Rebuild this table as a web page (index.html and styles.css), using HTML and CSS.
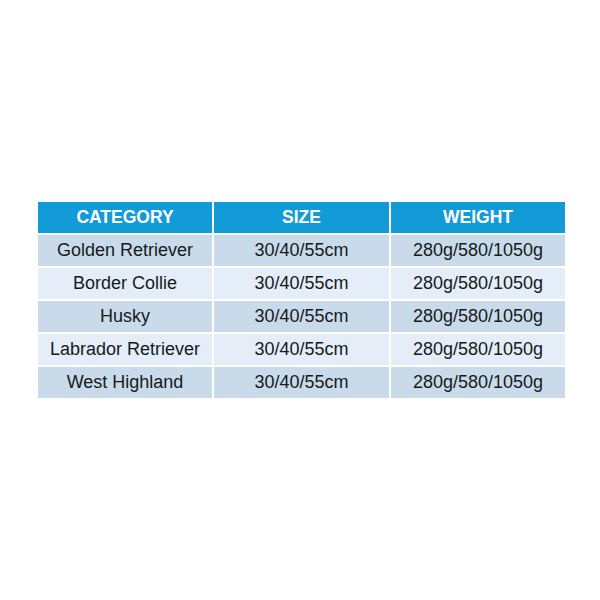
FILE: index.html
```html
<!DOCTYPE html>
<html>
<head>
<meta charset="utf-8">
<link rel="stylesheet" href="styles.css">
</head>
<body>
<div class="page">
  <div class="table">
    <div class="cell head">CATEGORY</div>
    <div class="cell head">SIZE</div>
    <div class="cell head">WEIGHT</div>

    <div class="cell odd">Golden Retriever</div>
    <div class="cell odd">30/40/55cm</div>
    <div class="cell odd">280g/580/1050g</div>

    <div class="cell even">Border Collie</div>
    <div class="cell even">30/40/55cm</div>
    <div class="cell even">280g/580/1050g</div>

    <div class="cell odd">Husky</div>
    <div class="cell odd">30/40/55cm</div>
    <div class="cell odd">280g/580/1050g</div>

    <div class="cell even">Labrador Retriever</div>
    <div class="cell even">30/40/55cm</div>
    <div class="cell even">280g/580/1050g</div>

    <div class="cell odd">West Highland</div>
    <div class="cell odd">30/40/55cm</div>
    <div class="cell odd">280g/580/1050g</div>
  </div>
</div>
</body>
</html>
```
FILE: styles.css
```css
html, body {
  margin: 0;
  padding: 0;
  background: #ffffff;
}
.page {
  width: 600px;
  height: 600px;
  padding-top: 202px;
  padding-left: 38px;
  box-sizing: border-box;
}
.table {
  display: grid;
  grid-template-columns: 174px 175px 174px;
  grid-template-rows: 31px repeat(5, 31px);
  column-gap: 2px;
  row-gap: 2px;
  width: 527px;
  font-family: "Liberation Sans", Arial, sans-serif;
}
.cell {
  display: flex;
  align-items: center;
  justify-content: center;
  font-size: 18px;
  color: #151a20;
}
.head {
  background: #139bd8;
  color: #ffffff;
  font-weight: bold;
  font-size: 17.5px;
}
.odd {
  background: #c9dbea;
}
.even {
  background: #e5eef8;
}
```
